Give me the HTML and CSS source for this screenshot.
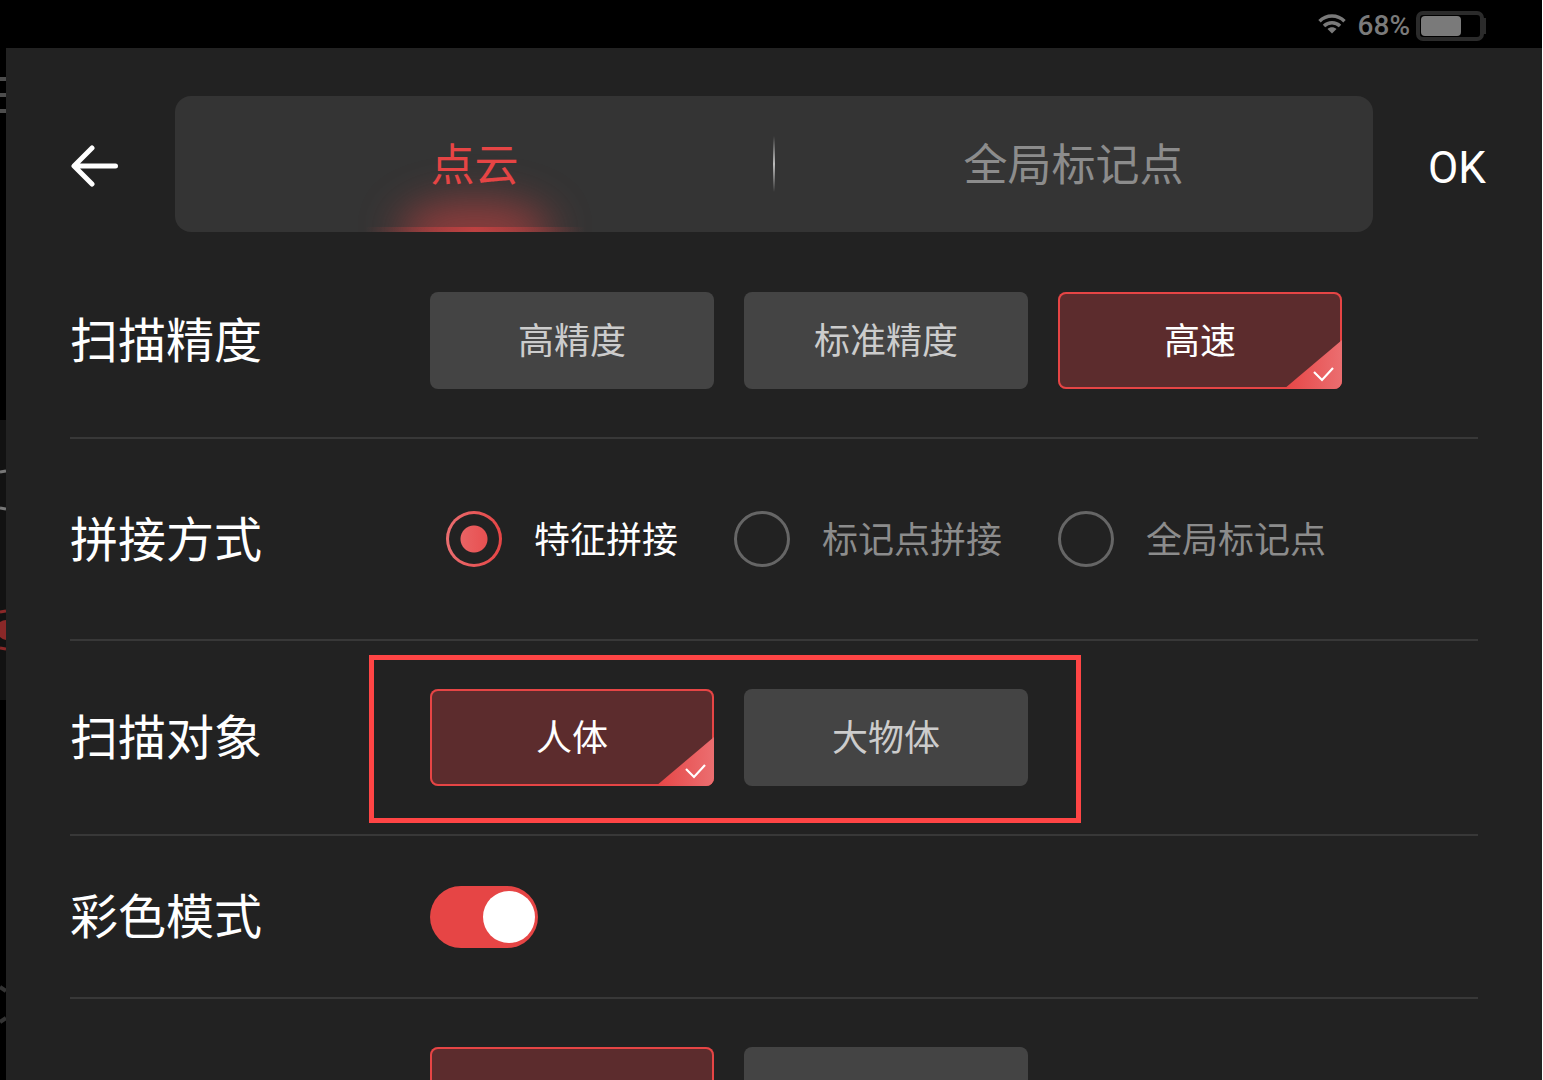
FILE: index.html
```html
<!DOCTYPE html>
<html lang="zh-CN">

<head>
    <meta charset="UTF-8">
    <meta name="viewport" content="width=device-width, initial-scale=1.0">
    <title>扫描设置</title>
    <link rel="stylesheet" href="styles.css">
</head>

<body>

    <!-- Status bar -->
    <div class="status-bar">
        <svg class="wifi" width="28" height="20" viewBox="0 0 28 20" fill="none" stroke="#7a7a7a" stroke-width="3.5">
            <path d="M1.5 7.2C8.500 .4 19.500 .4 26.500 7.200"></path>
            <path d="M6 12C10.500 7.700 17.500 7.700 22 12"></path>
            <path d="M14 19.500L9.500 15C12 12.800 16 12.800 18.500 15Z" fill="#7a7a7a" stroke="none"></path>
        </svg>
        <span class="battery-text">68%</span>
        <svg class="battery" width="70" height="30" viewBox="0 0 70 30">
            <rect x="2" y="2" width="64" height="26" rx="5" fill="none" stroke="#2b2b2b" stroke-width="4"></rect>
            <rect x="67" y="7" width="3" height="16" fill="#2b2b2b"></rect>
            <rect x="5" y="5" width="40" height="20" rx="4" fill="#7a7a7a"></rect>
        </svg>
    </div>

    <!-- Edge of the scan view behind the panel -->
    <svg class="backdrop" width="6" height="1032" viewBox="0 48 6 1032" fill="none">
        <path d="M0 79H6M0 95H6M0 111H6" stroke="#4d4d4d" stroke-width="4"></path>
        <rect x="0" y="420" width="6" height="280" fill="#121212"></rect>
        <path d="M0 472L6 471M0 508L6 509" stroke="#777" stroke-width="3"></path>
        <path d="M0 612L6 611M0 648L6 649" stroke="#8a2828" stroke-width="3"></path>
        <path d="M0 622Q3 620 6 620V640Q3 640 0 637Z" fill="#8a2828"></path>
        <path d="M0 987L6 991M0 1022L6 1018" stroke="#333" stroke-width="4"></path>
    </svg>

    <main class="panel">
        <header class="header">
            <button class="back" type="button" aria-label="返回">
                <svg width="48" height="42" viewBox="0 0 48 42" fill="none" stroke="#fff" stroke-width="5" stroke-linecap="round" stroke-linejoin="round">
                    <path d="M22 3L4 21L22 39M5 21H45.500"></path>
                </svg>
            </button>
            <nav class="tabs">
                <button class="tab active" type="button">点云</button>
                <button class="tab" type="button">全局标记点</button>
            </nav>
            <button class="ok" type="button">OK</button>
        </header>

        <section class="row">
            <h2>扫描精度</h2>
            <div class="options">
                <button class="option" type="button">高精度</button>
                <button class="option" type="button">标准精度</button>
                <button class="option selected" type="button">高速
                    <svg class="check" width="58" height="49" viewBox="0 0 58 49">
                        <defs>
                            <linearGradient id="corner">
                                <stop offset="0" stop-color="#e64545"></stop>
                                <stop offset="1" stop-color="#eb6e70"></stop>
                            </linearGradient>
                        </defs>
                        <path d="M0 49L58 0V49Z" fill="url(#corner)"></path>
                        <path d="M30 32L38 40L49 28" fill="none" stroke="#fff" stroke-width="2.2"></path>
                    </svg>
                </button>
            </div>
        </section>

        <section class="row">
            <h2>拼接方式</h2>
            <div class="radios">
                <label><input type="radio" name="align" checked><span>特征拼接</span></label>
                <label><input type="radio" name="align"><span>标记点拼接</span></label>
                <label><input type="radio" name="align"><span>全局标记点</span></label>
            </div>
        </section>

        <section class="row">
            <h2>扫描对象</h2>
            <div class="options highlighted">
                <button class="option selected" type="button">人体
                    <svg class="check" width="58" height="49" viewBox="0 0 58 49">
                        <path d="M0 49L58 0V49Z" fill="url(#corner)"></path>
                        <path d="M30 32L38 40L49 28" fill="none" stroke="#fff" stroke-width="2.2"></path>
                    </svg>
                </button>
                <button class="option" type="button">大物体</button>
            </div>
        </section>

        <section class="row">
            <h2><label for="color-mode">彩色模式</label></h2>
            <input type="checkbox" class="switch" id="color-mode" checked>
        </section>

        <section class="row">
            <div class="options last">
                <button class="option selected" type="button" aria-label="选项一"></button>
                <button class="option" type="button" aria-label="选项二"></button>
            </div>
        </section>
    </main>

</body>

</html>
```
FILE: styles.css
```css
* {
    box-sizing: border-box;
}

body {
    height: 100vh;
    margin: 0;
    display: flex;
    flex-direction: column;
    position: relative;
    overflow: hidden;
    background-color: #000;
    border-right: 1px solid #fff;
    color: #fff;
    font-family: Roboto, "Noto Sans CJK SC", sans-serif;
}

button {
    padding: 0;
    border: none;
    background: none;
    color: inherit;
    font-family: inherit;
    cursor: pointer;
}

/* Status bar */
.status-bar {
    flex: none;
    height: 48px;
    padding: 4px 56px 0 0;
    display: flex;
    justify-content: flex-end;
    align-items: center;
    color: #7a7a7a;
}

.wifi {
    margin: 0 12px 4px 0;
}

.battery-text {
    margin-right: 6px;
    font-size: 28px;
    font-weight: 500;
    line-height: 40px;
}

.backdrop {
    position: absolute;
    left: 0;
    top: 48px;
}

.panel {
    flex: 1;
    min-height: 0;
    margin-left: 6px;
    padding: 48px 64px 0;
    overflow-y: auto;
    scrollbar-width: none;
    background-color: #222;
}

/* Header */
.header {
    display: flex;
    align-items: center;
    height: 136px;
    margin: 0 -8px 12px 0;
}

.back {
    width: 48px;
    height: 48px;
    margin-right: 57px;
    padding-top: 4px;
}

.back svg {
    display: block;
}

.tabs {
    flex: 1;
    height: 136px;
    display: flex;
    position: relative;
    overflow: hidden;
    border-radius: 16px;
    background-color: #343434;
}

/* Divider between the tabs */
.tabs::after {
    content: "";
    position: absolute;
    left: 50%;
    top: 40px;
    width: 2px;
    height: 56px;
    margin-left: -1px;
    background: linear-gradient(transparent, #bbb, transparent);
}

.tab {
    flex: 1;
    position: relative;
    padding-top: 3px;
    color: #8c8c8c;
    font-size: 44px;
    line-height: 64px;
}

.tab.active {
    color: #e64545;
}

.tab.active::before {
    content: "";
    position: absolute;
    left: 50%;
    bottom: -32px;
    width: 152px;
    height: 64px;
    margin-left: -76px;
    border-radius: 50%;
    background-color: rgba(230, 69, 69, 0.5);
    filter: blur(20px);
}

.tab.active::after {
    content: "";
    position: absolute;
    left: 50%;
    bottom: 0;
    width: 220px;
    height: 5px;
    margin-left: -110px;
    background: linear-gradient(90deg, transparent, rgba(230, 69, 69, 0.6), transparent);
}

.ok {
    width: 58px;
    margin-left: 55px;
    padding-top: 8px;
    font-size: 44px;
    line-height: 64px;
}

/* Setting rows */
.row {
    display: flex;
    align-items: center;
    padding: 48px 0;
    border-bottom: 2px solid #383838;
}

.row h2 {
    width: 360px;
    margin: 0;
    padding-top: 3px;
    font-size: 48px;
    font-weight: 400;
    line-height: 62px;
}

.options {
    display: flex;
    gap: 30px;
    position: relative;
}

.options.last {
    margin-left: 360px;
}

.option {
    width: 284px;
    height: 97px;
    padding-top: 3px;
    position: relative;
    overflow: hidden;
    border-radius: 8px;
    background-color: #444;
    color: #ccc;
    font-size: 36px;
    line-height: 52px;
}

.option.selected {
    background-color: #5c2c2d;
    box-shadow: inset 0 0 0 2px #e64545;
    color: #fff;
}

.check {
    position: absolute;
    right: 0;
    bottom: 0;
}

.highlighted::after {
    content: "";
    position: absolute;
    inset: -34px -53px -37px -61px;
    border: 5px solid #ff4545;
    pointer-events: none;
}

.radios {
    height: 104px;
    padding-left: 16px;
    display: flex;
    align-items: center;
    gap: 56px;
}

.radios label {
    display: flex;
    align-items: center;
    gap: 32px;
    color: #8c8c8c;
    font-size: 36px;
    line-height: 52px;
}

.radios span {
    padding-top: 3px;
}

.radios label:has(input:checked) {
    color: #fff;
}

.radios input {
    appearance: none;
    width: 56px;
    height: 56px;
    margin: 0;
    border: 3px solid #666;
    border-radius: 50%;
}

.radios input:checked {
    border-color: transparent;
    background:
        radial-gradient(circle, transparent 13px, #222 14px) padding-box,
        linear-gradient(90deg, #eb6e70, #e64545) border-box;
}

.switch {
    appearance: none;
    width: 108px;
    height: 62px;
    margin: 0;
    padding: 0 3px;
    display: flex;
    align-items: center;
    border-radius: 31px;
    background-color: #666;
}

.switch::before {
    content: "";
    width: 52px;
    height: 52px;
    border-radius: 50%;
    background-color: #fff;
}

.switch:checked {
    justify-content: flex-end;
    background-color: #e64545;
}
```
